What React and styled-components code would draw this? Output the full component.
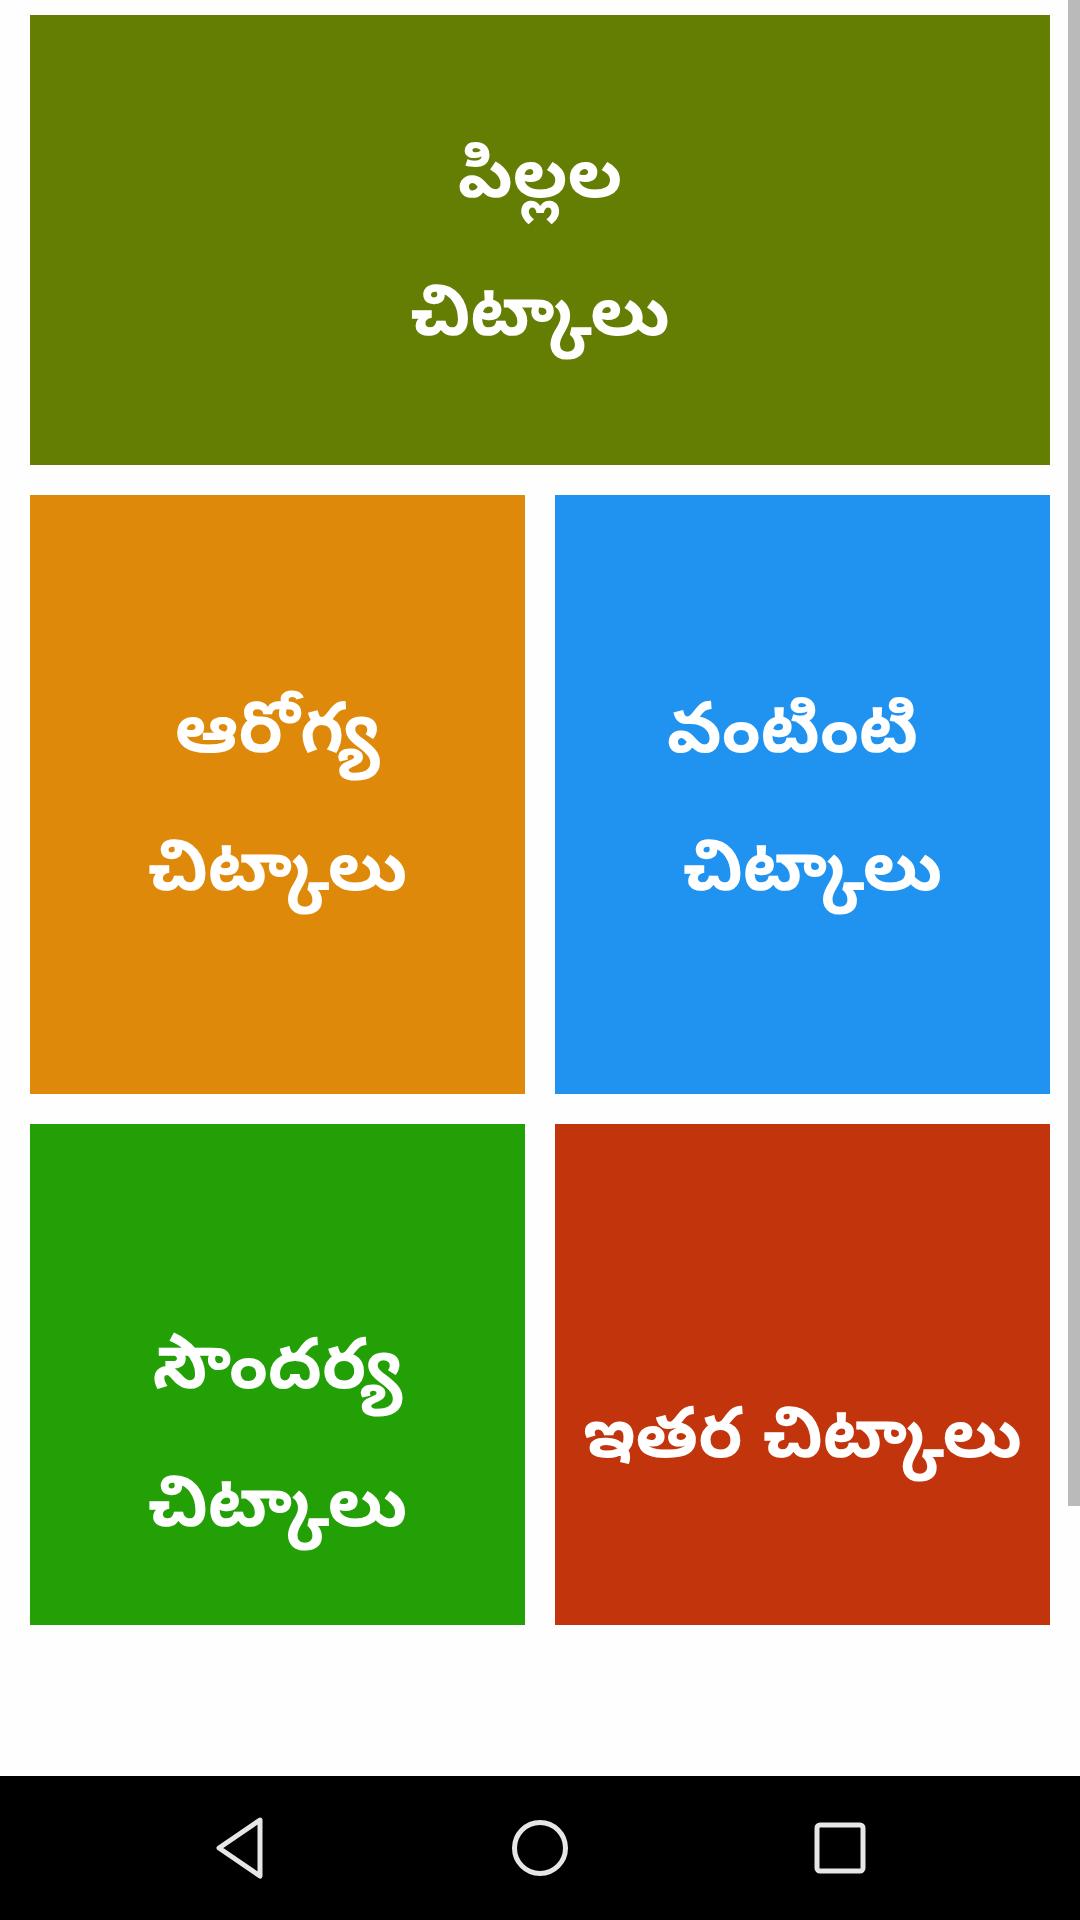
import React from "react";
import styled, { createGlobalStyle } from "styled-components";

const Global = createGlobalStyle`
  html, body { margin: 0; padding: 0; background: #fefefe; }
  #root { width: 1080px; height: 1920px; }
`;

const Screen = styled.div`
  position: relative;
  width: 1080px;
  height: 1920px;
  display: flex;
  flex-direction: column;
  background: #fefefe;
  font-family: "Noto Sans Telugu", "Noto Sans", "DejaVu Sans", sans-serif;
`;

const Content = styled.div`
  flex: 1;
  padding: 15px 30px 0 30px;
  display: flex;
  flex-direction: column;
  gap: 30px;
`;

const Row = styled.div`
  display: grid;
  grid-template-columns: 1fr 1fr;
  column-gap: 30px;
  height: ${(p) => p.$h}px;
`;

const Tile = styled.div`
  background: ${(p) => p.$bg};
  height: ${(p) => (p.$h ? `${p.$h}px` : "auto")};
  display: flex;
  align-items: center;
  justify-content: center;
  box-sizing: border-box;
  padding-top: ${(p) => 24 + (p.$offset || 0)}px;
`;

const Label = styled.div`
  color: #ffffff;
  font-weight: 700;
  font-size: 71px;
  line-height: 138px;
  text-align: center;
  white-space: pre;
`;

const Scrollbar = styled.div`
  position: absolute;
  top: 0;
  right: 0;
  width: 12px;
  height: 1506px;
  background: #bababa;
`;

const NavBar = styled.div`
  height: 144px;
  background: #000;
  display: grid;
  grid-template-columns: 1fr 1fr 1fr;
  align-items: center;
  justify-items: center;
  padding: 0 90px;
`;

const NavBtn = styled.div`
  display: flex;
  align-items: center;
  justify-content: center;
  width: 80px;
  height: 80px;
`;

export default function App() {
  return (
    <Screen>
      <Global />
      <Content>
        <Tile $bg="#637e03" $h={450}>
          <Label>{"పిల్లల\nచిట్కాలు"}</Label>
        </Tile>
        <Row $h={599}>
          <Tile $bg="#df890a">
            <Label>{"ఆరోగ్య\nచిట్కాలు"}</Label>
          </Tile>
          <Tile $bg="#2092f0">
            <Label>{"వంటింటి \n చిట్కాలు"}</Label>
          </Tile>
        </Row>
        <Row $h={501}>
          <Tile $bg="#22a006" $offset={112}>
            <Label>{"సౌందర్య\nచిట్కాలు"}</Label>
          </Tile>
          <Tile $bg="#c1340c" $offset={112}>
            <Label>{"ఇతర చిట్కాలు"}</Label>
          </Tile>
        </Row>
      </Content>
      <Scrollbar />
      <NavBar>
        <NavBtn>
          <svg width="52" height="62" viewBox="0 0 52 62">
            <path
              d="M46 3 L5 31 L46 59 Z"
              fill="none"
              stroke="#e6e6e6"
              strokeWidth="5"
              strokeLinejoin="round"
            />
          </svg>
        </NavBtn>
        <NavBtn>
          <svg width="62" height="62" viewBox="0 0 62 62">
            <circle cx="31" cy="31" r="25.5" fill="none" stroke="#e6e6e6" strokeWidth="5" />
          </svg>
        </NavBtn>
        <NavBtn>
          <svg width="56" height="56" viewBox="0 0 56 56">
            <rect x="5" y="5" width="46" height="46" rx="3" fill="none" stroke="#e6e6e6" strokeWidth="5" />
          </svg>
        </NavBtn>
      </NavBar>
    </Screen>
  );
}
